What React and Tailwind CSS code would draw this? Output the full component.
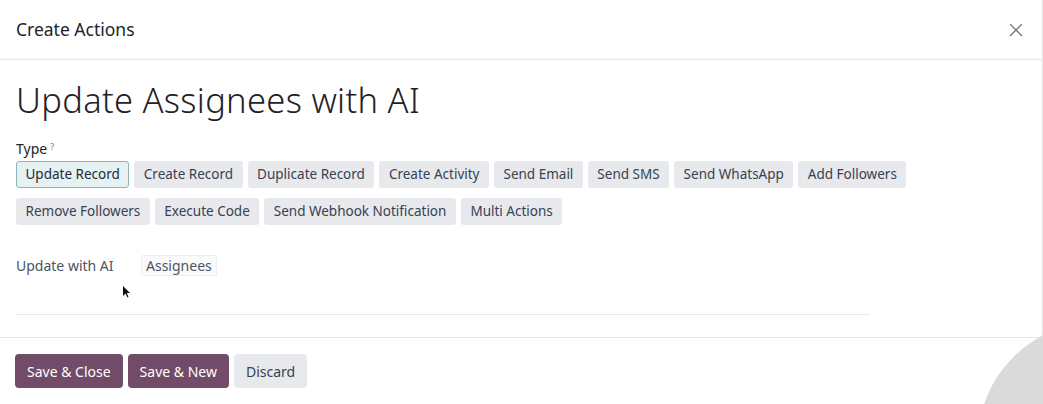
import React from "react";
import { X } from "lucide-react";

const types = [
  "Update Record",
  "Create Record",
  "Duplicate Record",
  "Create Activity",
  "Send Email",
  "Send SMS",
  "Send WhatsApp",
  "Add Followers",
  "Remove Followers",
  "Execute Code",
  "Send Webhook Notification",
  "Multi Actions",
];

const App = () => {
  return (
    <div
      className="relative w-[1043px] h-[404px] overflow-hidden bg-white text-[#374151]"
      style={{ fontFamily: '"Noto Sans", "Open Sans", sans-serif' }}
    >
      <div className="h-full border-r border-[#e5e5e5]">
        {/* header */}
        <div className="h-[60px] pl-4 pr-[15px] flex items-center justify-between border-b border-[#e6e6e6]">
          <h4 className="text-[17.5px] text-[#212529]">Create Actions</h4>
          <X className="w-[22px] h-[22px] text-[#777]" strokeWidth={1.4} />
        </div>

        {/* body */}
        <div className="px-4 pt-[18px]">
          <h1 className="text-[34.5px] leading-[44px] font-light text-[#1f2327] tracking-[0.3px]">
            Update Assignees with AI
          </h1>

          <div className="mt-[17px] mb-[2px] text-[14px] leading-5 text-[#212529]">
            Type<sup className="ml-[3px] text-[9px] text-[#777]">?</sup>
          </div>

          <div className="flex flex-wrap gap-x-[5px] gap-y-[10px] w-[910px]">
            {types.map((t, i) => (
              <button
                key={t}
                className={
                  i === 0
                    ? "h-[27px] px-[8.5px] text-[13.5px] rounded-[3px] border border-[#8fb4b6] bg-[#e6f1f2] text-[#1f2937]"
                    : "h-[27px] px-[9.5px] text-[13.5px] rounded-[3px] bg-[#e8e9ec] text-[#374151]"
                }
              >
                {t}
              </button>
            ))}
          </div>

          <div className="mt-[30px] flex items-center h-5 text-[14px]">
            <div className="w-[125px] text-[#4b5563]">Update with AI</div>
            <span className="px-[4px] leading-[19px] border border-[#eeeeee] bg-[#fafafa] rounded-[2px] text-[#4b5563]">
              Assignees
            </span>
          </div>

          <div className="mt-[39px] w-[854px] border-b border-[#e8e8e8]"></div>
        </div>

        {/* footer */}
        <div className="mt-[22px] border-t border-[#e6e6e6] px-[15px] pt-[16px] flex gap-[5px]">
          <button className="h-[34px] px-[12px] text-[14px] rounded-[4px] bg-[#714b67] text-white">
            Save &amp; Close
          </button>
          <button className="h-[34px] px-[12px] text-[14px] rounded-[4px] bg-[#714b67] text-white">
            Save &amp; New
          </button>
          <button className="h-[34px] px-[12px] text-[14px] rounded-[4px] bg-[#e8e9ec] text-[#374151]">
            Discard
          </button>
        </div>
      </div>

      {/* cursor */}
      <svg
        className="absolute left-[122px] top-[286px]"
        width="8"
        height="12"
        viewBox="0 0 8 12"
      >
        <path d="M1 0 L1 10 L3.5 7.5 L5.5 11.5 L6.5 11 L4.8 7 L8 7 Z" fill="#111" />
      </svg>

      {/* gray circle in corner */}
      <div className="absolute left-[978px] top-[322px] w-[240px] h-[240px] rounded-full bg-[#dadada]"></div>
    </div>
  );
};

export default App;
